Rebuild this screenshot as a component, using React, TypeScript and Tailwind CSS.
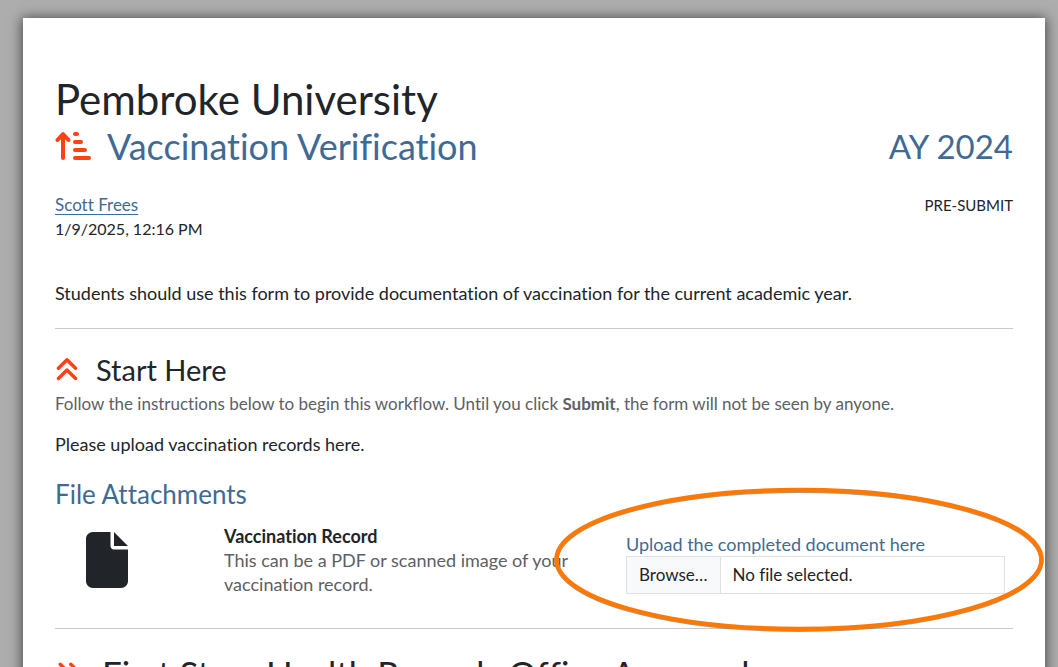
import { FaAnglesRight, FaAnglesUp, FaArrowUpShortWide, FaFile } from "react-icons/fa6";

function Rule() {
  return <hr className="border-t border-[#c8c9ca]" />;
}

function FileField() {
  return (
    <div>
      <label htmlFor="record" className="block text-[18px] leading-6 text-[#3f6a94]">
        Upload the completed document here
      </label>
      <div className="relative flex h-[38px] border border-[#dee2e6] bg-white">
        <span className="flex items-center border-r border-[#dee2e6] bg-[#f8f9fa] px-3">Browse…</span>
        <span className="flex items-center px-3">No file selected.</span>
        <input id="record" type="file" className="absolute inset-0 h-full w-full cursor-pointer opacity-0" />
      </div>
    </div>
  );
}

export default function App() {
  return (
    <div className="h-screen overflow-hidden bg-[#adadad] pt-[18px] pr-[13px] pl-[23px] font-['Century_Gothic','Lato',sans-serif] text-[17px] leading-6 text-[#212529] [font-variant-ligatures:none]">
      <main className="min-h-full bg-white px-8 pt-[57px] shadow-[0_1px_12px_1px_rgba(0,0,0,0.6)]">
        <header>
          <h1 className="text-[42px] leading-12">Pembroke University</h1>
          <div className="flex items-center justify-between text-[#3f6a94]">
            <h2 className="flex items-center gap-4 text-[36px] leading-[46px]">
              <FaArrowUpShortWide className="h-8 w-9 text-[#ff4114]" />
              Vaccination Verification
            </h2>
            <span className="text-[33px] leading-[46px]">AY 2024</span>
          </div>
          <div className="mt-6 flex justify-between">
            <div>
              <a href="#profile" className="text-[#3f6a94] underline underline-offset-3">Scott Frees</a>
              <p className="text-base leading-6">1/9/2025, 12:16 PM</p>
            </div>
            <p className="text-[15px] leading-6">PRE-SUBMIT</p>
          </div>
        </header>

        <p className="mt-10 mb-[23px] text-[18px] leading-6">
          Students should use this form to provide documentation of vaccination for the current academic year.
        </p>
        <Rule />

        <section className="pt-[23px] pb-8">
          <h3 className="flex items-center gap-[17px] text-[29px] leading-[36px]">
            <FaAnglesUp className="h-7 w-6 text-[#ff4114]" />
            Start Here
          </h3>
          <p className="mt-1 text-[#5d6064]">
            Follow the instructions below to begin this workflow. Until you click <strong>Submit</strong>, the form
            will not be seen by anyone.
          </p>
          <p className="mt-4 text-[18px] leading-6">Please upload vaccination records here.</p>
          <h4 className="mt-6 text-[26px] leading-[29px] text-[#3f6a94]">File Attachments</h4>
          <div className="mt-[15px] flex">
            <FaFile className="mt-2 ml-[31px] h-14 w-[42px] shrink-0" />
            <div className="ml-24 w-[355px] shrink-0 text-[18px] leading-6">
              <p className="font-bold">Vaccination Record</p>
              <p className="text-[#5d6064]">This can be a PDF or scanned image of your vaccination record.</p>
            </div>
            <div className="relative mt-2 mr-2 ml-[47px] flex-1">
              <FileField />
              <svg
                className="pointer-events-none absolute -top-[46px] -left-[73px] h-[148px] w-[494px] overflow-visible"
                viewBox="0 0 494 148"
                fill="none"
                aria-hidden="true"
              >
                <ellipse cx="246" cy="74.500" rx="242.500" ry="69.500" stroke="#777" strokeOpacity="0.7" strokeWidth="4" />
                <ellipse cx="246" cy="73.500" rx="242.500" ry="69.500" stroke="#ff7800" strokeWidth="4.500" />
              </svg>
            </div>
          </div>
        </section>
        <Rule />

        <section className="pt-[25px]">
          <h3 className="flex items-center gap-[19px] text-[35px] leading-[38px]">
            <FaAnglesRight className="h-8 w-7 text-[#ff4114]" />
            First Step: Health Records Office Approval
          </h3>
        </section>
      </main>
    </div>
  );
}
